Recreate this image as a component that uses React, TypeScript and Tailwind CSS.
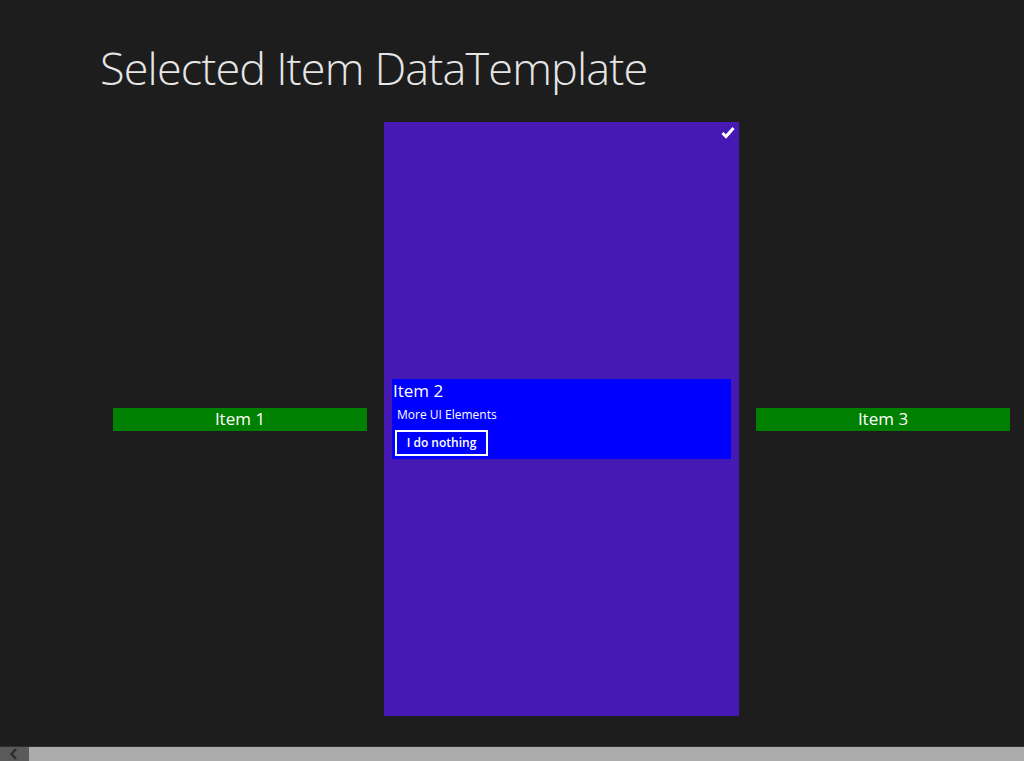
import React from "react";

const font = { fontFamily: '"Open Sans", "Noto Sans", sans-serif' };

const SideItem = ({ label }: { label: string }) => (
	<div className="w-[254px] h-[23px] shrink-0 bg-[#008000] flex items-center justify-center pb-[2px] text-[17px] leading-none text-white">
		{label}
	</div>
);

export default function App() {
	return (
		<div
			className="h-[761px] w-[1024px] overflow-hidden bg-[#1d1d1d] flex flex-col text-white"
			style={font}
		>
			{/* Header */}
			<h1 className="pl-[100px] pt-[38px] text-[45px] font-light leading-[60px] tracking-[-0.85px] text-[#e6e6e6]">
				Selected Item DataTemplate
			</h1>

			{/* Items row */}
			<div className="flex-1 flex items-center gap-[17px] pl-[113px] pt-[24px] pb-[30px]">
				<SideItem label="Item 1" />

				{/* Selected item */}
				<div className="relative w-[355px] h-[594px] shrink-0 bg-[#4619b4] flex items-center px-[8px]">
					<svg
						className="absolute right-[4px] top-[4px]"
						width="14"
						height="13"
						viewBox="0 0 14 13"
					>
						<path
							d="M1.5 7 L5 10.5 L12.5 2"
							stroke="white"
							strokeWidth="3"
							fill="none"
						/>
					</svg>
					<div className="w-full h-[80px] bg-[#0000ff] flex flex-col px-[1px] pt-[1px]">
						<div className="text-[17px] leading-[22px]">Item 2</div>
						<div className="pl-[4px] pt-[5px] text-[12px] leading-[16px]">
							More UI Elements
						</div>
						<button className="ml-[2px] mt-[7px] w-[93px] h-[26px] border-2 border-white text-[12px] font-semibold leading-none text-white">
							I do nothing
						</button>
					</div>
				</div>

				<SideItem label="Item 3" />
			</div>

			{/* Horizontal scrollbar */}
			<div className="h-[15px] flex border-t border-[#2e2e2e] bg-[#ababab]">
				<div className="w-[29px] h-full bg-[#5a5a5a] flex items-center justify-center pr-[3px]">
					<svg width="9" height="12" viewBox="0 0 9 12">
						<path
							d="M7 1 L2.5 6 L7 11"
							stroke="#2e2e2e"
							strokeWidth="2.5"
							fill="none"
						/>
					</svg>
				</div>
				<div className="flex-1" />
			</div>
		</div>
	);
}
